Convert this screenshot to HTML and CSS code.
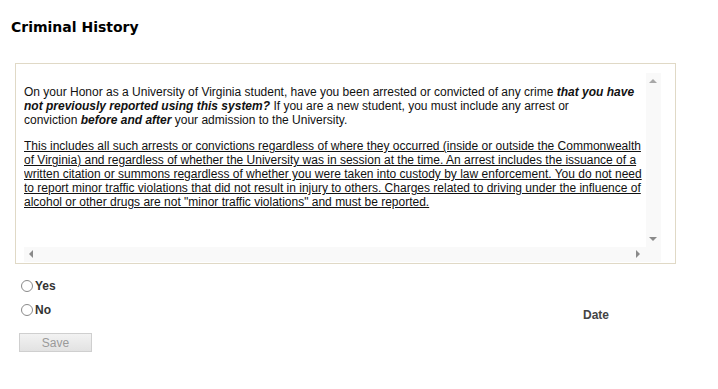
FILE: index.html
```html
<html>
<head>
    <title>Criminal History</title>
    <meta http-equiv="Content-Type" content="text/html; charset=utf-8"/>
    <link rel="stylesheet" href="styles.css">
</head>
<body>
<div class="app">
    <h2 class="title">Criminal History</h2>

    <div class="question-box">
        <div class="scroll-content">
            <p class="question">
                On your Honor as a University of Virginia student, have you been arrested or convicted of any crime <b><i>that you have not previously reported using this system?</i></b> If you are a new student, you must include any arrest or<br>
                conviction <b><i>before and after</i></b> your admission to the University.
            </p>
            <p class="details">
                This includes all such arrests or convictions regardless of where they occurred (inside or outside the Commonwealth of Virginia) and regardless of whether the University was in session at the time. An arrest includes the issuance of a written citation or summons regardless of whether you were taken into custody by law enforcement. You do not need to report minor traffic violations that did not result in injury to others. Charges related to driving under the influence of alcohol or other drugs are not "minor traffic violations" and must be reported.
            </p>
        </div>
        <div class="vbar">
            <span class="arrow up"></span>
            <span class="arrow down"></span>
        </div>
        <div class="hbar">
            <span class="arrow left"></span>
            <span class="arrow right"></span>
        </div>
        <div class="corner"></div>
    </div>

    <div class="answer-row">
        <div class="answers">
            <label class="choice"><input type="radio" name="answer"> Yes</label>
            <label class="choice"><input type="radio" name="answer"> No</label>
        </div>
        <div class="date-label">Date</div>
    </div>

    <button class="save" disabled>Save</button>
</div>
</body>
</html>
```

FILE: styles.css
```css
html {
    font-family: 'Liberation Sans', Arial, sans-serif;
    margin: 0;
}

body {
    margin: 0;
    font-size: 12px;
    color: #111;
}

.app {
    padding: 19px 0 0 15px;
}

.title {
    font-family: 'DejaVu Sans', Verdana, sans-serif;
    font-size: 14px;
    line-height: 16px;
    font-weight: bold;
    color: #000;
    margin: 0 0 28px -4px;
}

.question-box {
    width: 637px;
    border: 1px solid #e0d9c6;
    padding: 9px 14px 1px 8px;
    display: grid;
    grid-template-columns: 1fr 15px;
    grid-template-rows: 174px 15px;
}

.scroll-content {
    padding: 12px 0 0 0;
    overflow: hidden;
}

.scroll-content p {
    margin: 0 0 12px 0;
    line-height: 14px;
}

.details {
    text-decoration: underline;
}

.vbar, .hbar, .corner {
    background: #f9f9f9;
    position: relative;
}

.arrow {
    position: absolute;
    width: 0;
    height: 0;
}

.arrow.up {
    top: 6px;
    left: 3px;
    border-left: 4px solid transparent;
    border-right: 4px solid transparent;
    border-bottom: 4px solid #a8a8a8;
}

.arrow.down {
    bottom: 6px;
    left: 3px;
    border-left: 4px solid transparent;
    border-right: 4px solid transparent;
    border-top: 4px solid #8a8a8a;
}

.arrow.left {
    top: 3px;
    left: 5px;
    border-top: 4px solid transparent;
    border-bottom: 4px solid transparent;
    border-right: 4px solid #8a8a8a;
}

.arrow.right {
    top: 3px;
    right: 6px;
    border-top: 4px solid transparent;
    border-bottom: 4px solid transparent;
    border-left: 4px solid #8a8a8a;
}

.answer-row {
    display: flex;
    align-items: flex-end;
    margin-top: 15px;
}

.answers {
    display: flex;
    flex-direction: column;
    gap: 10px;
    width: 568px;
}

.choice {
    display: flex;
    align-items: center;
    font-weight: bold;
    color: #333;
    line-height: 14px;
    margin-left: 6px;
}

.choice input {
    appearance: none;
    -webkit-appearance: none;
    width: 12px;
    height: 12px;
    border: 1px solid #8a8a8a;
    border-radius: 50%;
    margin: 0 2px 0 0;
    background: white;
}

.date-label {
    font-weight: bold;
    color: #444;
    margin-bottom: -5px;
}

.save {
    display: block;
    margin: 16px 0 0 4px;
    width: 73px;
    height: 19px;
    padding: 0;
    border: 1px solid #cfcfcf;
    background: linear-gradient(#f2f2f2, #e2e2e2);
    color: #9a9a9a;
    font-family: 'Liberation Sans', Arial, sans-serif;
    font-size: 12px;
}
```
